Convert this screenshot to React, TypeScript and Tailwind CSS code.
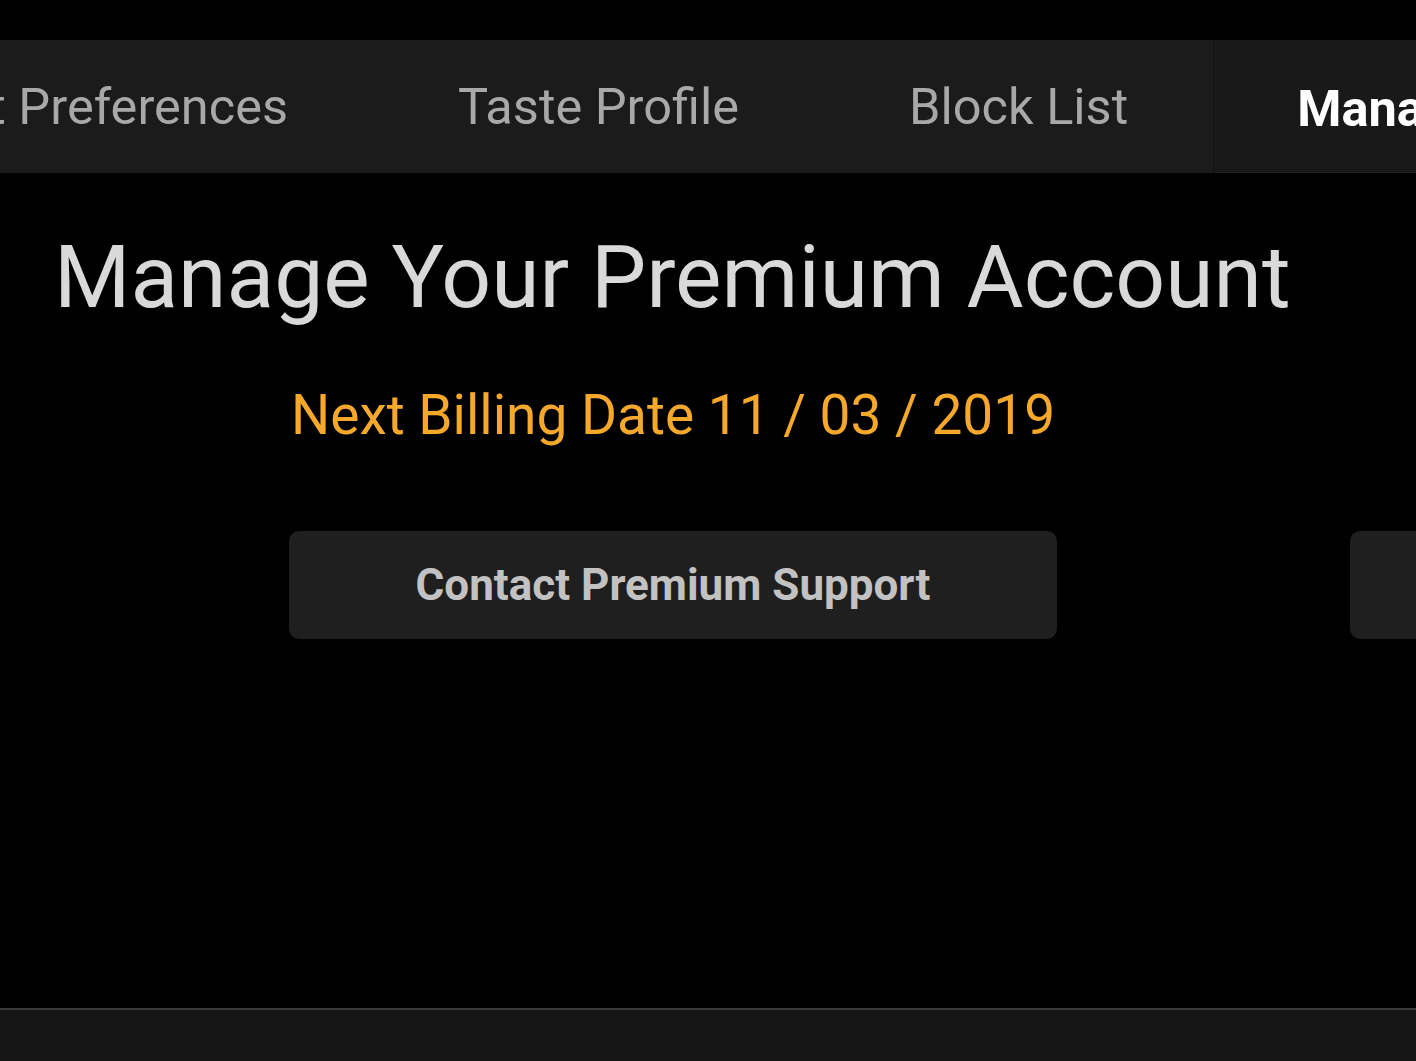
import React from "react";

const tabs = ["Taste Profile", "Block List"];

export default function App() {
  return (
    <div
      className="flex h-[1061px] w-[1416px] flex-col overflow-hidden bg-black"
      style={{ fontFamily: "Roboto, 'Noto Sans', sans-serif" }}
    >
      {/* tab strip, scrolled sideways */}
      <div className="mt-10 flex h-[133px] flex-none overflow-hidden bg-[#1b1b1b]">
        <div className="flex w-[373px] flex-none items-center justify-end pr-[85px]">
          <span className="whitespace-nowrap text-[50.5px] text-[#a8a8a8]">Content Preferences</span>
        </div>
        {tabs.map((t) => (
          <div key={t} className="flex flex-none items-center px-[85px]">
            <span className="whitespace-nowrap text-[50.5px] text-[#a8a8a8]">{t}</span>
          </div>
        ))}
        <div className="flex h-[137px] flex-none items-center border-l border-[#111] bg-[#191919] pl-[83px] pr-[85px] shadow-[inset_0_-5px_0_#222]">
          <span className="whitespace-nowrap text-[50.5px] font-bold text-white">Manage Premium</span>
        </div>
      </div>

      <main className="flex-1">
        <h1 className="mt-[61px] whitespace-nowrap pl-[54px] text-[87.6px] leading-none text-[#d9d9d9]">
          Manage Your Premium Account
        </h1>
        <p className="mt-[66px] whitespace-nowrap pl-[291px] text-[55px] leading-none text-[#f5a82a]">
          Next Billing Date 11 / 03 / 2019
        </p>
        <div className="mt-[88px] flex gap-[293px] pl-[289px]">
          <button className="h-[108px] w-[768px] flex-none rounded-[10px] bg-[#1f1f1f] text-[44px] font-bold text-[#c2c2c2]">
            Contact Premium Support
          </button>
          <button className="h-[108px] w-[768px] flex-none rounded-[10px] bg-[#1f1f1f] text-[44px] font-bold text-[#c2c2c2]">
            Cancel Premium
          </button>
        </div>
      </main>

      <footer className="h-[53px] flex-none border-t-2 border-[#3a3a3a] bg-[#161616]" />
    </div>
  );
}
